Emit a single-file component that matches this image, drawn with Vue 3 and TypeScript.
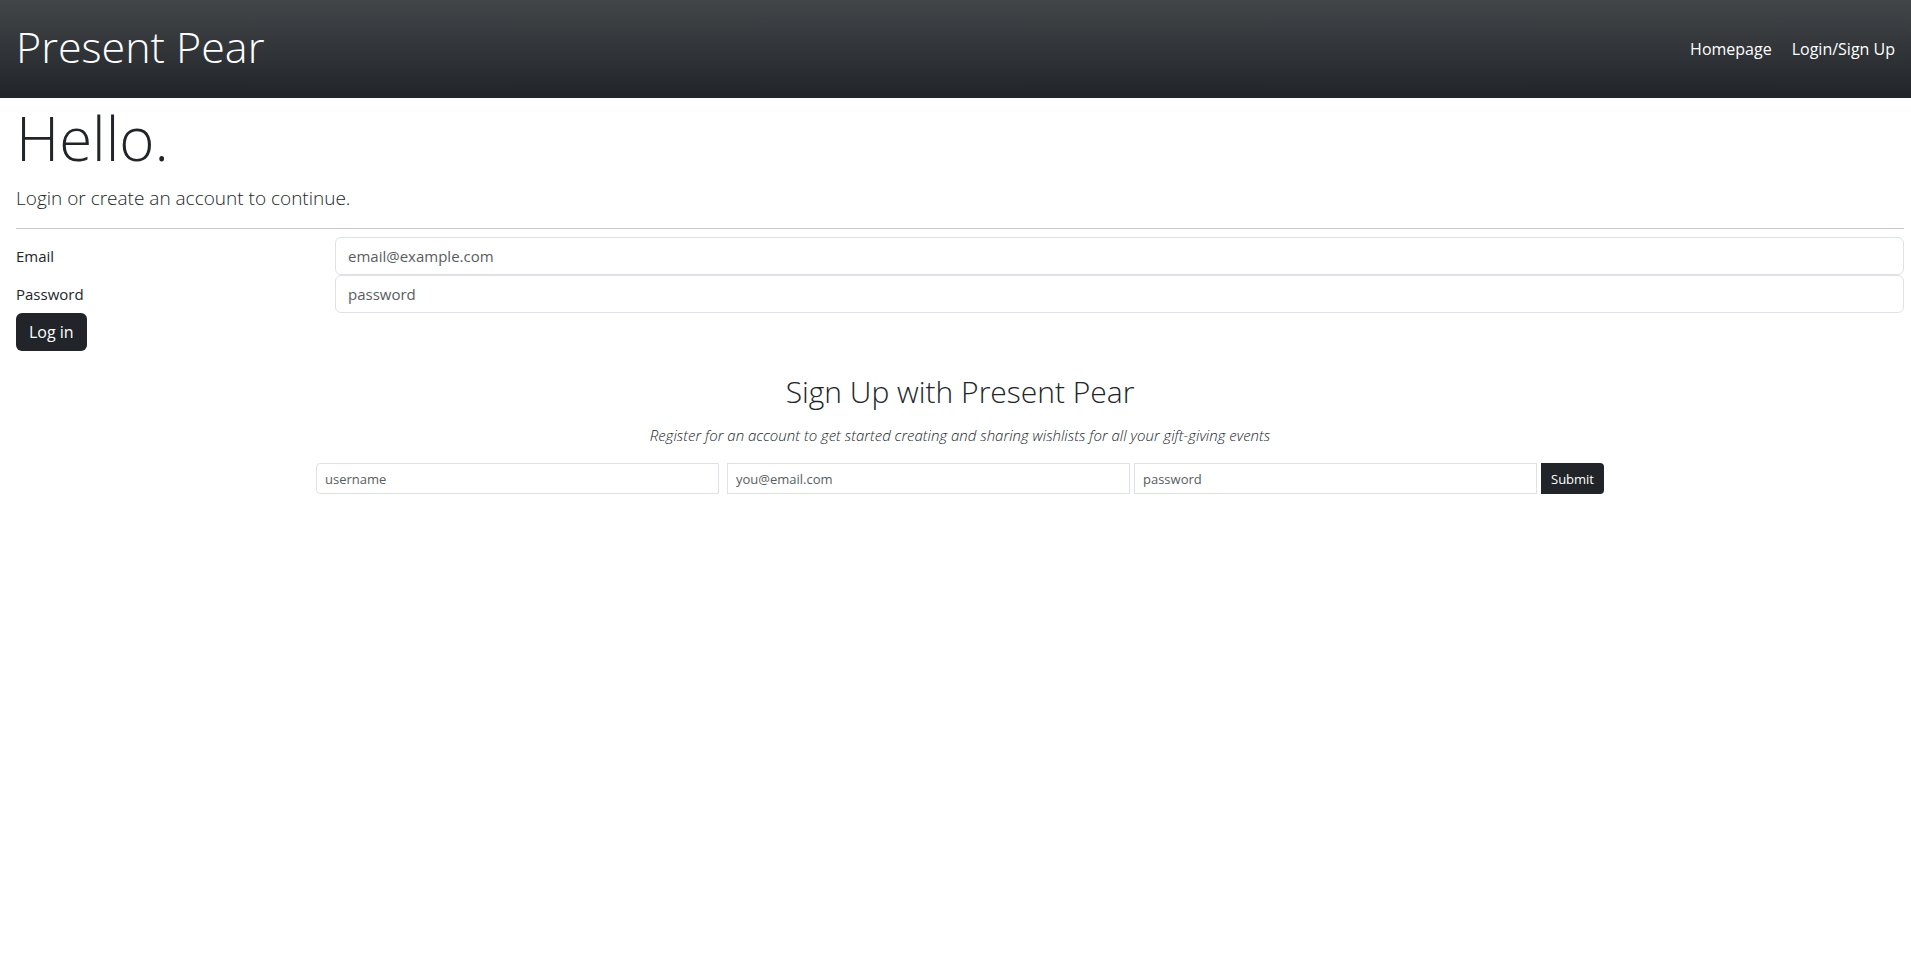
<script setup lang="ts">
import { ref } from 'vue'

const login = ref({ email: '', password: '' })
const signup = ref({ username: '', email: '', password: '' })
</script>

<template>
  <header class="site-header">
    <a class="brand" href="#">Present Pear</a>
    <nav class="links">
      <a href="#">Homepage</a>
      <a href="#login">Login/Sign Up</a>
    </nav>
  </header>
  <main class="page">
    <h1 class="hello">Hello.</h1>
    <p class="lead">Login or create an account to continue.</p>
    <hr class="rule" />
    <form id="login" class="login" @submit.prevent>
      <label for="login-email">Email</label>
      <input id="login-email" v-model="login.email" type="email" placeholder="email@example.com" />
      <label for="login-password">Password</label>
      <input id="login-password" v-model="login.password" type="password" placeholder="password" />
      <button class="button" type="submit">Log in</button>
    </form>
    <section class="signup">
      <h2>Sign Up with Present Pear</h2>
      <p class="note">Register for an account to get started creating and sharing wishlists for all your gift-giving events</p>
      <form class="signup-form" @submit.prevent>
        <input v-model="signup.username" class="first" type="text" placeholder="username" aria-label="Username" />
        <input v-model="signup.email" type="email" placeholder="you@email.com" aria-label="Email" />
        <input v-model="signup.password" type="password" placeholder="password" aria-label="Password" />
        <button class="button small" type="submit">Submit</button>
      </form>
    </section>
  </main>
</template>

<style>
body {
  margin: 0;
  background: #fff;
  color: #212529;
  font-family: "Segoe UI", "Open Sans", "Noto Sans", sans-serif;
  font-size: 15px;
  line-height: 24px;
}
</style>

<style scoped>
* {
  box-sizing: border-box;
}
.site-header {
  display: flex;
  align-items: center;
  justify-content: space-between;
  height: 98px;
  padding: 0 16px;
  background: linear-gradient(#424649, #212529);
}
.site-header a {
  color: #fff;
  text-decoration: none;
}
.site-header .brand {
  padding-bottom: 4px;
  font-size: 43px;
  font-weight: 300;
  line-height: 58px;
}
.links {
  display: flex;
  gap: 20px;
  font-size: 16px;
}
.page {
  padding: 2px 7px 0 16px;
}
.hello {
  margin: 0 0 8px;
  font-size: 60px;
  font-weight: 300;
  line-height: 77px;
}
.lead {
  margin: 0;
  font-size: 19px;
  font-weight: 300;
  line-height: 26px;
}
.rule {
  margin: 17px 0 8px;
  border: 0;
  border-top: 1px solid #c8c9ca;
}
.login {
  display: grid;
  grid-template-columns: 319px 1fr;
  align-items: center;
}
input {
  width: 100%;
  min-width: 0;
  height: 38px;
  padding: 0 12px;
  border: 1px solid #dee2e6;
  border-radius: 6px;
  background: #fff;
  color: #212529;
  font: inherit;
}
input::placeholder {
  color: #595c5f;
  opacity: 1;
}
.button {
  justify-self: start;
  height: 38px;
  padding: 0 13px;
  border: 0;
  border-radius: 6px;
  background: #212529;
  color: #fff;
  font: inherit;
  font-size: 16px;
}
.signup {
  padding-top: 22px;
  text-align: center;
}
.signup h2 {
  margin: 0 0 12px;
  font-size: 30px;
  font-weight: 300;
  line-height: 38px;
}
.note {
  margin: 0 0 16px;
  font-size: 15px;
  font-weight: 350;
  font-style: italic;
}
.signup-form {
  display: flex;
  justify-content: center;
  gap: 4px;
  width: 1288px;
  max-width: 100%;
  margin: 0 auto;
}
.signup-form input {
  flex: 1;
  height: 31px;
  padding: 0 8px;
  border-radius: 0;
  font-size: 13px;
}
.signup-form .first {
  margin-right: 4px;
  border-radius: 4px 0 0 4px;
}
.button.small {
  height: 31px;
  padding: 0 10px;
  border-radius: 0 4px 4px 0;
  font-size: 13px;
}
</style>
